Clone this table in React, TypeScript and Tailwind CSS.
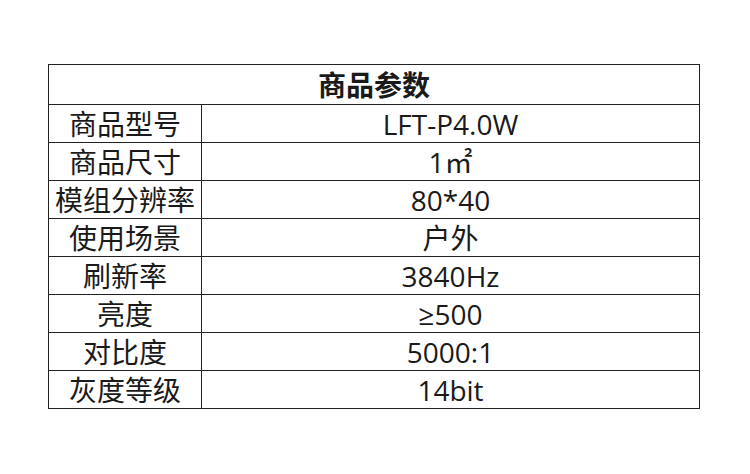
const rows: [string, string][] = [
  ["商品型号", "LFT-P4.0W"],
  ["商品尺寸", "1㎡"],
  ["模组分辨率", "80*40"],
  ["使用场景", "户外"],
  ["刷新率", "3840Hz"],
  ["亮度", "≥500"],
  ["对比度", "5000:1"],
  ["灰度等级", "14bit"],
];

export default function App() {
  return (
    <div
      className="w-[750px] h-[474px] bg-white pt-[64px] pl-[48px]"
      style={{ fontFamily: '"Open Sans", "Noto Sans CJK SC", sans-serif' }}
    >
      <table className="w-[652px] border-collapse border-[1.5px] border-[#222] text-[#1a1a1a] text-[28px]">
        <thead>
          <tr className="h-[40px]">
            <th colSpan={2} className="border-[1.5px] border-[#222] font-bold text-center leading-none">
              商品参数
            </th>
          </tr>
        </thead>
        <tbody>
          {rows.map(([k, v]) => (
            <tr key={k} className="h-[38px]">
              <td className="w-[153px] border-[1.5px] border-[#222] text-center leading-none p-0">{k}</td>
              <td className="border-[1.5px] border-[#222] text-center leading-none p-0">{v}</td>
            </tr>
          ))}
        </tbody>
      </table>
    </div>
  );
}
